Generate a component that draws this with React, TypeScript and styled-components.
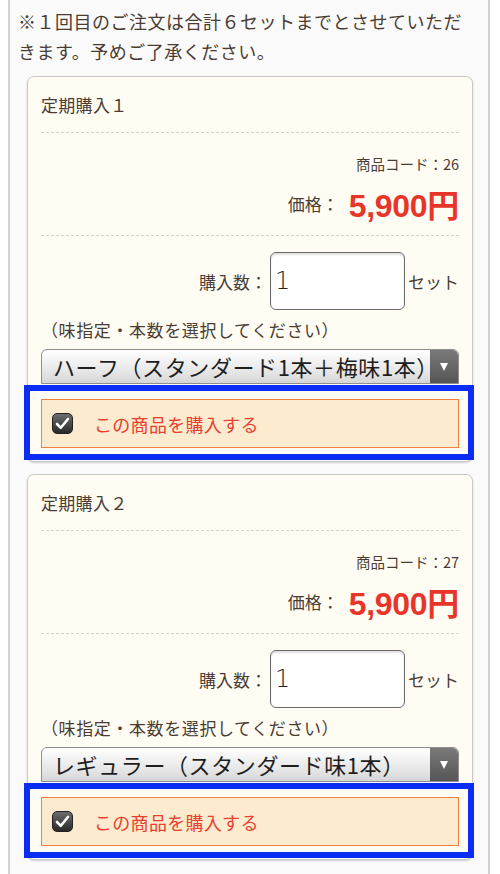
import React from "react";
import styled, { createGlobalStyle } from "styled-components";

const Global = createGlobalStyle`
  html, body { margin: 0; padding: 0; background: #ffffff; }
  body { font-family: "Noto Sans CJK JP", "Noto Sans", sans-serif; color: #4a3c33; }
  * { box-sizing: border-box; }
`;

const Page = styled.div`
  margin: 0 10px 0 8px;
  border-left: 2px solid #d2d2d2;
  border-right: 2px solid #d2d2d2;
  background: #fafafa;
  padding: 6px 15px 12px 17px;
  min-height: 874px;
`;

const Notice = styled.p`
  margin: 0 0 10px -9px;
  font-size: 18px;
  line-height: 30px;
  letter-spacing: 0.5px;
  color: #4a3c33;
`;

const Card = styled.section`
  background: #fffdf3;
  border: 1px solid #c9c9c9;
  border-radius: 7px;
  box-shadow: 0 1px 2px rgba(0, 0, 0, 0.18);
  padding: 0 13px 13px;
  margin-bottom: 12px;
`;

const Title = styled.h2`
  margin: 0;
  padding: 15px 0;
  font-size: 17px;
  font-weight: 400;
  line-height: 25px;
  letter-spacing: 0.3px;
  border-bottom: 1px dashed #d4d4d4;
`;

const PriceBlock = styled.div`
  padding: 21px 0 13px;
  display: flex;
  flex-direction: column;
  align-items: flex-end;
  gap: 10px;
  border-bottom: 1px dashed #d4d4d4;
`;

const Code = styled.div`
  font-size: 14.5px;
  line-height: 20px;
`;

const PriceLine = styled.div`
  display: flex;
  align-items: center;
  height: 38px;
  font-size: 17px;
`;

const Price = styled.span`
  margin-left: 10px;
  font-family: "Liberation Sans", "Noto Sans CJK JP", sans-serif;
  font-weight: 700;
  font-size: 32px;
  color: #e8352a;
  letter-spacing: -0.3px;
`;

const QtyRow = styled.div`
  margin-top: 16px;
  display: flex;
  justify-content: flex-end;
  align-items: center;
  font-size: 17px;
  gap: 3px;
`;

const QtyInput = styled.div`
  width: 135px;
  height: 58px;
  background: #ffffff;
  border: 1px solid #6a6a6a;
  border-radius: 6px;
  box-shadow: inset 0 2px 2px rgba(0, 0, 0, 0.12);
  display: flex;
  align-items: center;
  padding-left: 4px;
  font-family: "DejaVu Sans", "Liberation Sans", sans-serif;
  font-size: 24px;
  font-weight: 300;
  color: #222;
`;

const Hint = styled.div`
  margin-top: 8px;
  font-size: 17px;
  line-height: 24px;
  letter-spacing: 0.6px;
`;

const Select = styled.div`
  margin-top: 7px;
  height: 35px;
  display: flex;
  border: 1px solid #8e8e8e;
  border-radius: 6px 6px 0 0;
  background: linear-gradient(#ffffff, #e4e4e4 70%, #d6d6d6);
  overflow: hidden;
`;

const SelectText = styled.div`
  flex: 1;
  min-width: 0;
  padding-left: 11px;
  font-size: 22px;
  letter-spacing: 0.6px;
  line-height: 33px;
  color: #1e1e1e;
  white-space: nowrap;
  overflow: hidden;
`;

const SelectArrow = styled.div`
  width: 28px;
  flex: none;
  background: linear-gradient(#7a7a7a, #555555);
  border-radius: 0 5px 0 0;
  display: flex;
  align-items: center;
  justify-content: center;
  &::after {
    content: "";
    border-left: 4.5px solid transparent;
    border-right: 4.5px solid transparent;
    border-top: 8px solid #ffffff;
  }
`;

const Purchase = styled.label`
  position: relative;
  margin-top: 15px;
  height: 49px;
  display: flex;
  align-items: center;
  gap: 21px;
  padding-left: 10px;
  background: #fdebd0;
  border: 1px solid #f0803e;
  font-size: 18px;
  color: #e8402f;
  letter-spacing: 0.3px;
`;

const Highlight = styled.span`
  position: absolute;
  left: -18px;
  right: -16px;
  top: -15px;
  bottom: -13px;
  border: 6px solid #0b2cf2;
  pointer-events: none;
`;

const Check = styled.span`
  width: 21px;
  height: 21px;
  flex: none;
  border-radius: 5px;
  background: linear-gradient(#6c6c6c, #2a2a2a);
  border: 1px solid #222;
  display: flex;
  align-items: center;
  justify-content: center;
`;

type Item = { no: string; code: string; option: string };

const items: Item[] = [
  { no: "１", code: "26", option: "ハーフ（スタンダード1本＋梅味1本）" },
  { no: "２", code: "27", option: "レギュラー（スタンダード味1本）" },
];

function ProductCard({ item }: { item: Item }) {
  return (
    <Card>
      <Title>定期購入{item.no}</Title>
      <PriceBlock>
        <Code>商品コード：{item.code}</Code>
        <PriceLine>
          価格：<Price>5,900円</Price>
        </PriceLine>
      </PriceBlock>
      <QtyRow>
        <span>購入数：</span>
        <QtyInput>1</QtyInput>
        <span>セット</span>
      </QtyRow>
      <Hint>（味指定・本数を選択してください）</Hint>
      <Select>
        <SelectText>{item.option}</SelectText>
        <SelectArrow />
      </Select>
      <Purchase>
        <Check>
          <svg width="15" height="13" viewBox="0 0 15 13">
            <path d="M2 7 L5.8 10.8 L13 2" fill="none" stroke="#ffffff" strokeWidth="2.6" strokeLinecap="round" strokeLinejoin="round" />
          </svg>
        </Check>
        この商品を購入する
        <Highlight />
      </Purchase>
    </Card>
  );
}

export default function App() {
  return (
    <>
      <Global />
      <Page>
        <Notice>※１回目のご注文は合計６セットまでとさせていただきます。予めご了承ください。</Notice>
        {items.map((it) => (
          <ProductCard key={it.code} item={it} />
        ))}
      </Page>
    </>
  );
}
